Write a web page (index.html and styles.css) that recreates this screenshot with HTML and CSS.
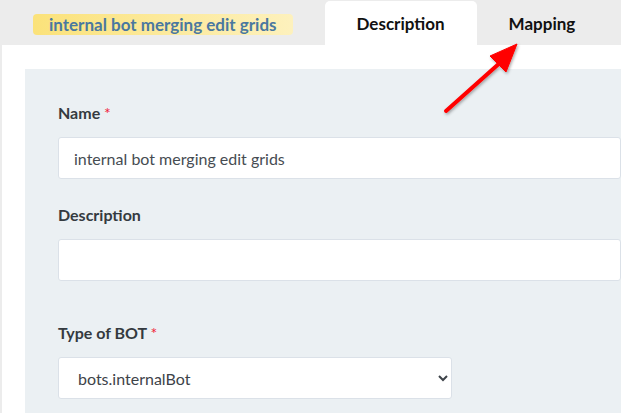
FILE: index.html
```html
<!DOCTYPE html>
<html lang="en">
<head>
    <meta charset="UTF-8">
    <meta name="viewport" content="width=device-width, initial-scale=1.0">
    <title>Bot settings</title>
    <link rel="stylesheet" href="styles.css">
</head>
<body>
    <div class="page">
        <!-- top bar: bot name + tabs -->
        <div class="top-bar">
            <span class="bot-tag">internal bot merging edit grids</span>
            <div class="tabs">
                <div class="tab active">Description</div>
                <div class="tab">Mapping</div>
            </div>
        </div>
        <!-- tab content -->
        <div class="tab-body">
            <form class="bot-form">
                <div class="field">
                    <label class="field-label">Name <span class="req">*</span></label>
                    <input class="field-input" type="text" value="internal bot merging edit grids">
                </div>
                <div class="field field-wide">
                    <label class="field-label">Description</label>
                    <input class="field-input" type="text" value="">
                </div>
                <div class="field">
                    <label class="field-label">Type of BOT <span class="req">*</span></label>
                    <select class="field-input field-select">
                        <option>bots.internalBot</option>
                    </select>
                </div>
            </form>
        </div>
        <!-- pointer to the mapping tab -->
        <svg class="hint-arrow" width="100" height="90" viewBox="0 0 100 90">
            <defs>
                <filter id="arrowShadow" x="-20%" y="-20%" width="140%" height="140%">
                    <feDropShadow dx="1" dy="1.5" stdDeviation="1.5" flood-color="#000" flood-opacity="0.35"/>
                </filter>
            </defs>
            <g filter="url(#arrowShadow)" fill="#ff0000" stroke="#ff0000">
                <line x1="6" y1="79" x2="62" y2="29" stroke-width="4" stroke-linecap="round"/>
                <polygon points="77,12 50,24 66,40" stroke-width="1" stroke-linejoin="round"/>
            </g>
        </svg>
    </div>
</body>
</html>
```

FILE: styles.css
```css
*{
    margin: 0;
    padding: 0;
    box-sizing: border-box;
}
body{
    background: #ececec;
    font-family: Lato, "Noto Sans", sans-serif;
    overflow: hidden;
}
.page{
    position: relative;
    width: 621px;
    height: 413px;
    overflow: hidden;
}
.top-bar{
    display: flex;
    align-items: flex-end;
    height: 45px;
    padding-left: 33px;
}
.bot-tag{
    align-self: flex-start;
    margin-top: 14px;
    height: 21px;
    line-height: 21px;
    padding: 0 16px;
    border-radius: 4px;
    background: linear-gradient(to right, #fbe27a, #fdf1bd);
    color: #4a78a0;
    font-size: 17px;
    font-weight: 700;
}
.tabs{
    display: flex;
    margin-left: 32px;
}
.tab{
    height: 44px;
    line-height: 46px;
    padding: 0 32px;
    text-align: center;
    font-size: 17px;
    font-weight: 700;
    color: #111;
    border-radius: 5px 5px 0 0;
}
.tab.active{
    background: #fff;
}
.tab-body{
    margin-left: 2px;
    height: 368px;
    background: #fff;
    padding: 24px 0 0 23px;
}
.bot-form{
    background: #ebf0f3;
    height: 100%;
    padding: 34px 0 0 33px;
}
.field{
    margin-bottom: 26px;
}
.field-wide{
    margin-bottom: 42px;
}
.field-label{
    display: block;
    height: 20px;
    line-height: 20px;
    margin-bottom: 14px;
    font-size: 16px;
    font-weight: 700;
    color: #343a40;
}
.req{
    color: #f0233a;
    font-weight: 400;
}
.field-input{
    display: block;
    width: 100%;
    height: 42px;
    padding: 0 15px;
    border: 1px solid #dbe1e8;
    border-radius: 3px;
    background: #fff;
    font-family: Lato, "Noto Sans", sans-serif;
    font-size: 16px;
    color: #464c52;
}
.field-select{
    width: 394px;
    padding: 0 10px 0 15px;
    color: #3d4349;
}
.hint-arrow{
    position: absolute;
    left: 440px;
    top: 32px;
}
```
